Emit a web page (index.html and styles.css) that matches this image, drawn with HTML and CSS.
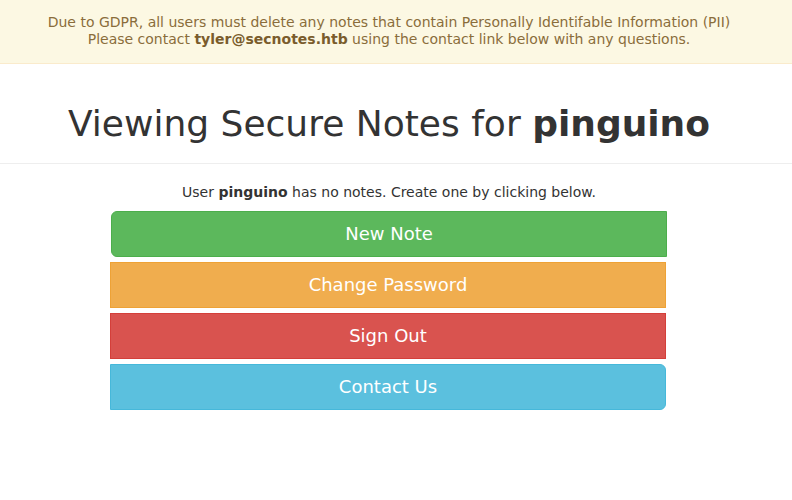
FILE: index.html
```html
<!DOCTYPE html>
<html>
<head>
<meta charset="utf-8">
<link rel="stylesheet" href="styles.css">
</head>
<body>
<div class="notice">
  <div class="wrap">Due to GDPR, all users must delete any notes that contain Personally Identifable Information (PII)<br>Please contact <strong>tyler@secnotes.htb</strong> using the contact link below with any questions.</div>
</div>
<div class="page-header">
  <h1 class="wrap">Viewing Secure Notes for <strong>pinguino</strong></h1>
</div>
<p class="empty wrap">User <strong>pinguino</strong> has no notes. Create one by clicking below.</p>
<div class="actions">
  <a class="btn btn-success">New Note</a>
  <a class="btn btn-warning">Change Password</a>
  <a class="btn btn-danger">Sign Out</a>
  <a class="btn btn-info">Contact Us</a>
</div>
</body>
</html>
```
FILE: styles.css
```css
html, body {
  margin: 0;
  padding: 0;
  background: #fff;
}
body {
  font-family: "DejaVu Sans", sans-serif;
  font-size: 14px;
  line-height: 1.42857;
  color: #333;
}
.wrap {
  width: 778px;
  text-align: center;
}
.notice {
  background: #fcf8e3;
  border-bottom: 1px solid #faebcc;
  color: #8a6d3b;
  padding: 14px 0 15px;
  line-height: 17px;
}
.notice strong { color: #7a5c2c; }
.page-header {
  border-bottom: 1px solid #eee;
  padding: 0 0 19px;
  margin: 0 0 18px;
}
.page-header h1 {
  margin: 0;
  padding-top: 40px;
  font-size: 36px;
  font-weight: 500;
  line-height: 1.1;
}
.empty {
  margin: 0 0 9px;
  line-height: 20px;
}
.actions {
  width: 556px;
  margin-left: 110px;
  display: flex;
  flex-direction: column;
  align-items: flex-start;
  gap: 5px;
}
.btn {
  display: block;
  box-sizing: border-box;
  width: 556px;
  height: 46px;
  padding: 10px 16px;
  font-size: 18px;
  line-height: 24px;
  text-align: center;
  color: #fff;
  border: 1px solid transparent;
}
.btn-success {
  background: #5cb85c;
  border-color: #4cae4c;
  border-radius: 6px 0 0 6px;
  margin-left: 1px;
}
.btn-warning {
  background: #f0ad4e;
  border-color: #eea236;
}
.btn-danger {
  background: #d9534f;
  border-color: #d43f3a;
}
.btn-info {
  background: #5bc0de;
  border-color: #46b8da;
  border-radius: 0 6px 6px 0;
}
```
